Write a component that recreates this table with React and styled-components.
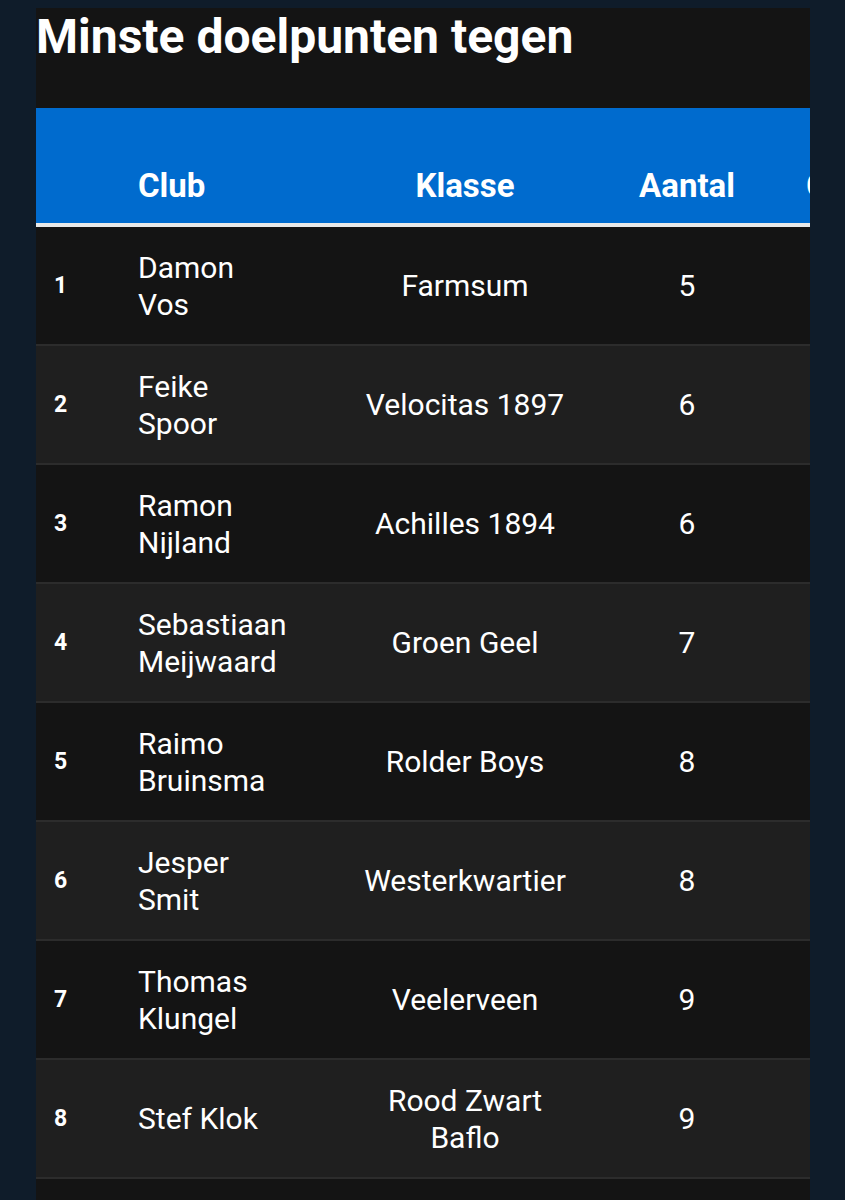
import React from "react";
import styled, { createGlobalStyle } from "styled-components";

const GlobalStyle = createGlobalStyle`
    html, body {
        margin: 0;
        padding: 0;
        background: #0f1c2a;
        font-family: Roboto, "Noto Sans", "Liberation Sans", sans-serif;
    }
`;

const COLUMNS = "102px 170px 314px 130px 240px";

const Page = styled.div`
    padding: 8px 35px 0 36px;
    height: 1200px;
    box-sizing: border-box;
    overflow: hidden;
`;

const Panel = styled.div`
    background: #141414;
    height: 100%;
    overflow: hidden;
`;

const Title = styled.h1`
    margin: 0;
    height: 96px;
    color: #fff;
    font-size: 48px;
    font-weight: 700;
    line-height: 58px;
`;

const Table = styled.div`
    width: max-content;
`;

const HeadRow = styled.div`
    display: grid;
    grid-template-columns: ${COLUMNS};
    height: 115px;
    background: #006bce;
    border-bottom: 4px solid #e9e9e9;
    margin-top: 4px;
`;

const HeadCell = styled.div`
    display: flex;
    align-items: flex-end;
    justify-content: ${(p) => (p.$align === "center" ? "center" : "flex-start")};
    padding: 0 0 19px ${(p) => p.$indent || 0}px;
    color: #fff;
    font-size: 33px;
    font-weight: 700;
    line-height: 36px;
    white-space: nowrap;
`;

const Row = styled.div`
    display: grid;
    grid-template-columns: ${COLUMNS};
    height: 117px;
    background: ${(p) => (p.$even ? "#1f1f1f" : "#141414")};
    border-bottom: 2px solid #2c2c2c;
`;

const Rank = styled.div`
    display: flex;
    align-items: center;
    padding-left: 18px;
    color: #fff;
    font-size: 23px;
    font-weight: 700;
`;

const Name = styled.div`
    display: flex;
    align-items: center;
    padding-right: 19px;
    color: #fff;
    font-size: 30px;
    line-height: 37px;
`;

const Center = styled.div`
    display: flex;
    align-items: center;
    justify-content: center;
    text-align: center;
    padding: 0 ${(p) => p.$pad || 0}px;
    color: #fff;
    font-size: 30px;
    line-height: 37px;
`;

const rows = [
    ["Damon Vos", "Farmsum", 5],
    ["Feike Spoor", "Velocitas 1897", 6],
    ["Ramon Nijland", "Achilles 1894", 6],
    ["Sebastiaan Meijwaard", "Groen Geel", 7],
    ["Raimo Bruinsma", "Rolder Boys", 8],
    ["Jesper Smit", "Westerkwartier", 8],
    ["Thomas Klungel", "Veelerveen", 9],
    ["Stef Klok", "Rood Zwart Baflo", 9],
    ["Jan de Vries", "Oranje Nassau", 10],
];

export default function App() {
    return (
        <>
            <GlobalStyle />
            <Page>
                <Panel>
                    <Title>Minste doelpunten tegen</Title>
                    <Table>
                        <HeadRow>
                            <HeadCell />
                            <HeadCell>Club</HeadCell>
                            <HeadCell $align="center">Klasse</HeadCell>
                            <HeadCell $align="center">Aantal</HeadCell>
                            <HeadCell $indent={54}>Gespeeld</HeadCell>
                        </HeadRow>
                        {rows.map(([name, club, count], i) => (
                            <Row key={name} $even={i % 2 === 1}>
                                <Rank>{i + 1}</Rank>
                                <Name>{name}</Name>
                                <Center $pad={50}>{club}</Center>
                                <Center>{count}</Center>
                                <Center />
                            </Row>
                        ))}
                    </Table>
                </Panel>
            </Page>
        </>
    );
}
